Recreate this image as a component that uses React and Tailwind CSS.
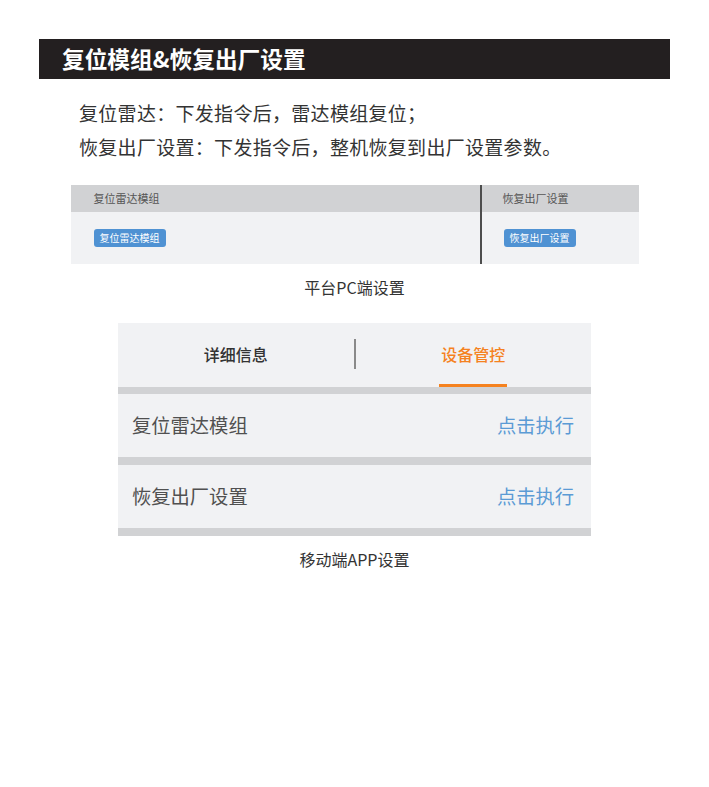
import React from "react";

const FONT = { fontFamily: '"Noto Sans CJK SC", "Noto Sans", sans-serif' };

export default function App() {
  return (
    <div className="w-[709px] min-h-[787px] bg-white pt-[39px]" style={FONT}>
      <div className="ml-[39px] w-[631px]">
        <div className="h-[40px] bg-[#231f20] flex items-center pl-[23px]">
          <span className="text-white text-[22.7px] font-bold leading-none">复位模组&amp;恢复出厂设置</span>
        </div>
        <div className="mt-[17px] pl-[40px] text-[19px] tracking-[0.3px] leading-[34px] text-[#333333]">
          <div>复位雷达：下发指令后，雷达模组复位；</div>
          <div>恢复出厂设置：下发指令后，整机恢复到出厂设置参数。</div>
        </div>
      </div>

      <div className="mt-[21px] mx-auto w-[568px] flex bg-[#f1f2f4]">
        <div className="flex-1 flex flex-col">
          <div className="h-[27px] bg-[#d1d2d4] flex items-center pl-[23px] text-[11px] text-[#555555]">复位雷达模组</div>
          <div className="h-[52px] flex items-center pl-[23px]">
            <div className="h-[18px] w-[72px] rounded-[3px] bg-[#4f92d3] text-white text-[10px] flex items-center justify-center leading-none">复位雷达模组</div>
          </div>
        </div>
        <div className="w-[2px] bg-[#4d4d4d]" />
        <div className="w-[157px] flex flex-col">
          <div className="h-[27px] bg-[#d1d2d4] flex items-center pl-[21px] text-[11px] text-[#555555]">恢复出厂设置</div>
          <div className="h-[52px] flex items-center pl-[22px]">
            <div className="h-[18px] w-[72px] rounded-[3px] bg-[#4f92d3] text-white text-[10px] flex items-center justify-center leading-none">恢复出厂设置</div>
          </div>
        </div>
      </div>

      <div className="mt-[12px] text-center text-[16px] leading-[22px] text-[#333333]">平台PC端设置</div>

      <div className="mt-[25px] mx-auto w-[473px] bg-[#f1f2f4] flex flex-col">
        <div className="h-[64px] flex">
          <div className="flex-1 flex items-center justify-center pb-[3px] text-[16px] font-medium text-[#333333]">详细信息</div>
          <div className="w-[2px] h-[30px] self-center mb-[3px] bg-[#8a8a8a]" />
          <div className="flex-1 flex flex-col items-center">
            <div className="flex-1 flex items-center text-[16px] font-medium text-[#f5821f]">设备管控</div>
            <div className="w-[68px] h-[3px] bg-[#f5821f]" />
          </div>
        </div>
        <div className="h-[7px] bg-[#d1d2d4]" />
        <div className="h-[63px] flex items-center justify-between pl-[14px] pr-[17px] text-[19.3px]">
          <span className="text-[#505050]">复位雷达模组</span>
          <span className="text-[#5b9bd5]">点击执行</span>
        </div>
        <div className="h-[8px] bg-[#d1d2d4]" />
        <div className="h-[63px] flex items-center justify-between pl-[14px] pr-[17px] text-[19.3px]">
          <span className="text-[#505050]">恢复出厂设置</span>
          <span className="text-[#5b9bd5]">点击执行</span>
        </div>
        <div className="h-[8px] bg-[#d1d2d4]" />
      </div>

      <div className="mt-[12px] text-center text-[16px] leading-[22px] text-[#333333]">移动端APP设置</div>
    </div>
  );
}
